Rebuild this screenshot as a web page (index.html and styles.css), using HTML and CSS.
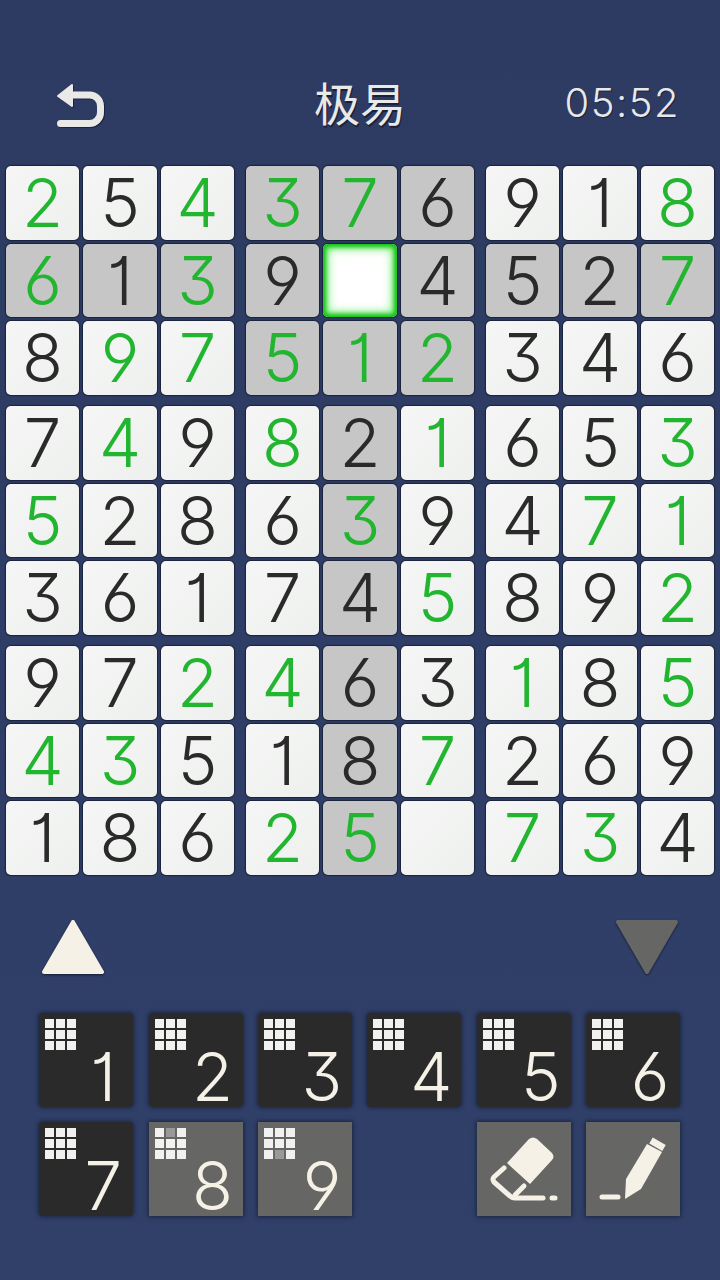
FILE: index.html
```html
<!DOCTYPE html>
<html>
<head>
    <meta http-equiv="Content-Type" content="text/html;charset=UTF-8"/>
    <title>极易</title>
    <link rel="stylesheet" href="styles.css">
</head>
<body>
<div class="header">
    <svg class="back" viewBox="0 0 48 44">
        <path class="back-head" d="M1 12 L15 1 V22 Z"/>
        <path class="back-line" d="M14 11 H32 A11 11 0 0 1 43.5 22 V28 A11 11 0 0 1 32 39.5 H3.5"/>
    </svg>
    <div class="title">极易</div>
    <div class="timer">05:52</div>
</div>

<div class="board">
    <div class="block">
        <div class="cell g">2</div><div class="cell">5</div><div class="cell g">4</div>
        <div class="cell hi g">6</div><div class="cell hi">1</div><div class="cell hi g">3</div>
        <div class="cell">8</div><div class="cell g">9</div><div class="cell g">7</div>
    </div>
    <div class="block">
        <div class="cell hi g">3</div><div class="cell hi g">7</div><div class="cell hi">6</div>
        <div class="cell hi">9</div><div class="cell sel"></div><div class="cell hi">4</div>
        <div class="cell hi g">5</div><div class="cell hi g">1</div><div class="cell hi g">2</div>
    </div>
    <div class="block">
        <div class="cell">9</div><div class="cell">1</div><div class="cell g">8</div>
        <div class="cell hi">5</div><div class="cell hi">2</div><div class="cell hi g">7</div>
        <div class="cell">3</div><div class="cell">4</div><div class="cell">6</div>
    </div>
    <div class="block">
        <div class="cell">7</div><div class="cell g">4</div><div class="cell">9</div>
        <div class="cell g">5</div><div class="cell">2</div><div class="cell">8</div>
        <div class="cell">3</div><div class="cell">6</div><div class="cell">1</div>
    </div>
    <div class="block">
        <div class="cell g">8</div><div class="cell hi">2</div><div class="cell g">1</div>
        <div class="cell">6</div><div class="cell hi g">3</div><div class="cell">9</div>
        <div class="cell">7</div><div class="cell hi">4</div><div class="cell g">5</div>
    </div>
    <div class="block">
        <div class="cell">6</div><div class="cell">5</div><div class="cell g">3</div>
        <div class="cell">4</div><div class="cell g">7</div><div class="cell g">1</div>
        <div class="cell">8</div><div class="cell">9</div><div class="cell g">2</div>
    </div>
    <div class="block">
        <div class="cell">9</div><div class="cell">7</div><div class="cell g">2</div>
        <div class="cell g">4</div><div class="cell g">3</div><div class="cell">5</div>
        <div class="cell">1</div><div class="cell">8</div><div class="cell">6</div>
    </div>
    <div class="block">
        <div class="cell g">4</div><div class="cell hi">6</div><div class="cell">3</div>
        <div class="cell">1</div><div class="cell hi">8</div><div class="cell g">7</div>
        <div class="cell g">2</div><div class="cell hi g">5</div><div class="cell"></div>
    </div>
    <div class="block">
        <div class="cell g">1</div><div class="cell">8</div><div class="cell g">5</div>
        <div class="cell">2</div><div class="cell">6</div><div class="cell">9</div>
        <div class="cell g">7</div><div class="cell g">3</div><div class="cell">4</div>
    </div>
</div>

<div class="arrows">
    <svg class="arrow" viewBox="0 0 64 56"><path class="arrow-up" d="M32 3 L61 53 H3 Z"/></svg>
    <svg class="arrow" viewBox="0 0 64 56"><path class="arrow-down" d="M3 3 H61 L32 53 Z"/></svg>
</div>

<div class="keypad">
    <div class="key"><div class="mini"><i></i><i></i><i></i><i></i><i></i><i></i><i></i><i></i><i></i></div><span class="num">1</span></div>
    <div class="key"><div class="mini"><i></i><i></i><i></i><i></i><i></i><i></i><i></i><i></i><i></i></div><span class="num">2</span></div>
    <div class="key"><div class="mini"><i></i><i></i><i></i><i></i><i></i><i></i><i></i><i></i><i></i></div><span class="num">3</span></div>
    <div class="key"><div class="mini"><i></i><i></i><i></i><i></i><i></i><i></i><i></i><i></i><i></i></div><span class="num">4</span></div>
    <div class="key"><div class="mini"><i></i><i></i><i></i><i></i><i></i><i></i><i></i><i></i><i></i></div><span class="num">5</span></div>
    <div class="key"><div class="mini"><i></i><i></i><i></i><i></i><i></i><i></i><i></i><i></i><i></i></div><span class="num">6</span></div>
    <div class="key"><div class="mini"><i></i><i></i><i></i><i></i><i></i><i></i><i></i><i></i><i></i></div><span class="num">7</span></div>
    <div class="key off"><div class="mini"><i></i><i class="dim"></i><i></i><i></i><i></i><i></i><i></i><i></i><i></i></div><span class="num">8</span></div>
    <div class="key off"><div class="mini"><i></i><i></i><i></i><i></i><i></i><i></i><i></i><i class="dim"></i><i></i></div><span class="num">9</span></div>
    <div class="key off tool-first">
        <svg class="tool" viewBox="0 0 94 94">
            <path class="tool-fill" d="M52 17 Q56 14 60 17 L75 31 Q78 35 75 38 L53 62 L30 41 Z"/>
            <path class="tool-line" d="M27 46 L17 55 Q15 57 17 60 L33 74 Q35 76 38 76 H66"/>
            <path class="tool-line" d="M47 64 L38 73"/>
            <path class="tool-line" d="M75 76 H78"/>
        </svg>
    </div>
    <div class="key off">
        <svg class="tool" viewBox="0 0 94 94">
            <path class="tool-fill" d="M61 22 L76 30 L55 67 L39 77 L40 57 Z"/>
            <path class="tool-line cap" d="M65 18.5 L78 26"/>
            <path class="tool-line" d="M16 75 H32"/>
        </svg>
    </div>
</div>
</body>
</html>
```

FILE: styles.css
```css
body {
    margin: 0;
    width: 720px;
    height: 1280px;
    overflow: hidden;
    background: linear-gradient(#2d3b62, #304069);
    font-family: Inter, "Liberation Sans", "Noto Sans CJK SC", sans-serif;
    font-feature-settings: "cv01", "cv03", "cv04", "cv09";
}

.header {
    display: grid;
    grid-template-columns: 1fr auto 1fr;
    align-items: center;
    box-sizing: border-box;
    height: 166px;
    padding: 40px 40px 0;
}

.back {
    width: 48px;
    height: 44px;
    margin: 6px 0 0 17px;
    filter: drop-shadow(1px 1px 0 rgba(15, 20, 40, 0.6));
}

.back-head {
    fill: #e9e9e7;
    stroke: #e9e9e7;
    stroke-width: 2;
    stroke-linejoin: round;
}

.back-line {
    fill: none;
    stroke: #e9e9e7;
    stroke-width: 7;
    stroke-linecap: round;
}

.title {
    margin-bottom: 4px;
    font-family: "Noto Sans CJK SC", sans-serif;
    font-size: 46px;
    line-height: 50px;
    color: #e9e9e7;
    text-shadow: 1px 2px 0 rgba(15, 20, 40, 0.7);
}

.timer {
    justify-self: end;
    font-size: 40px;
    font-weight: 300;
    line-height: 50px;
    letter-spacing: 1.5px;
    color: #e6e8ec;
    text-shadow: 1px 1px 0 rgba(15, 20, 40, 0.7);
}

.board {
    display: grid;
    grid-template-columns: repeat(3, 228.5px);
    gap: 11.5px;
    margin-left: 5.75px;
}

.block {
    display: grid;
    grid-template-columns: repeat(3, 73.5px);
    grid-auto-rows: 73.5px;
    gap: 4px;
}

.cell {
    display: flex;
    align-items: center;
    justify-content: center;
    border-radius: 5px;
    background: linear-gradient(135deg, #f5f6f5, #eef0ee);
    box-shadow: 0 0 1px 1px rgba(20, 26, 44, 0.75);
    color: #2a2a2a;
    font-size: 67px;
    font-weight: 350;
    line-height: 1;
}

.cell.hi {
    background: #c6c6c6;
}

.cell.g {
    color: #22b52f;
}

.cell.sel {
    background: #fff;
    box-shadow: 0 0 1px 1px rgba(20, 26, 44, 0.75), inset 0 0 4px 3px #0fc20f, inset 0 0 10px 5px #7cec7c;
}

.arrows {
    display: flex;
    justify-content: space-between;
    margin: 44px 41px 0;
}

.arrow {
    width: 64px;
    height: 56px;
    filter: drop-shadow(0 1px 1px rgba(15, 20, 40, 0.8));
}

.arrow-up {
    fill: #f5f1e7;
    stroke: #f5f1e7;
    stroke-width: 4;
    stroke-linejoin: round;
}

.arrow-down {
    fill: #666664;
    stroke: #666664;
    stroke-width: 4;
    stroke-linejoin: round;
}

.keypad {
    display: grid;
    grid-template-columns: repeat(6, 94px);
    grid-auto-rows: 94px;
    gap: 15.5px 15.4px;
    margin: 38.4px 0 0 39.2px;
}

.key {
    position: relative;
    border-radius: 4px;
    background: #2a2a2a;
    box-shadow: 0 0 4px 1px rgba(15, 20, 40, 0.6);
}

.key.off {
    border-radius: 0;
    background: #666664;
}

.tool-first {
    grid-column: 5;
}

.mini {
    display: grid;
    grid-template-columns: repeat(3, 9px);
    grid-auto-rows: 9px;
    gap: 2px;
    padding: 6px;
}

.mini i {
    background: #f1f2f0;
}

.mini i.dim {
    background: #999;
}

.num {
    position: absolute;
    right: 1px;
    bottom: 0;
    width: 58px;
    height: 60px;
    text-align: center;
    color: #f5f1e7;
    font-size: 67px;
    font-weight: 350;
    line-height: 60px;
}

.tool {
    display: block;
    width: 94px;
    height: 94px;
}

.tool-fill {
    fill: #f5f1e7;
}

.tool-line {
    fill: none;
    stroke: #f5f1e7;
    stroke-width: 5;
    stroke-linecap: round;
    stroke-linejoin: round;
}

.tool-line.cap {
    stroke-width: 7;
    stroke-linecap: butt;
}
```
